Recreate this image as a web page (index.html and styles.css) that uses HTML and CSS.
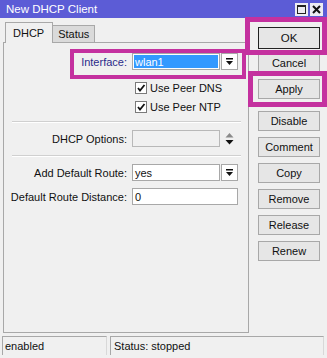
FILE: index.html
```html
<!DOCTYPE html>
<html>
<head>
<meta charset="utf-8">
<link rel="stylesheet" href="styles.css">
</head>
<body>
<div class="window">
  <div class="titlebar">
    <span class="title">New DHCP Client</span>
    <div class="win-btns">
      <span class="win-btn"><svg width="9" height="9" viewBox="0 0 9 9"><rect x="0.5" y="0.5" width="8" height="8" fill="none" stroke="#222" stroke-width="1"/><rect x="0.5" y="0.5" width="8" height="1.5" fill="#222"/></svg></span>
      <span class="win-btn"><svg width="9" height="9" viewBox="0 0 9 9"><path d="M1 1 L8 8 M8 1 L1 8" stroke="#111" stroke-width="2"/></svg></span>
    </div>
  </div>
  <div class="content">
    <div class="left">
      <div class="tabs">
        <span class="tab active">DHCP</span>
        <span class="tab">Status</span>
      </div>
      <div class="panel">
        <div class="row r-iface">
          <span class="label iface-label">Interface:</span>
          <span class="input w88 selected"><span class="sel">wlan1</span></span>
          <span class="dd"><svg width="9" height="9" viewBox="0 0 9 9"><rect x="1" y="1" width="7" height="1.5" fill="#111"/><path d="M1 4 H8 L4.5 8 Z" fill="#111"/></svg></span>
        </div>
        <div class="row check r-dns">
          <span class="label"></span>
          <span class="cb"><svg width="10" height="10" viewBox="0 0 10 10"><path d="M2 5 L4 7.5 L8.5 2" fill="none" stroke="#111" stroke-width="1.8"/></svg></span>
          <span class="cb-text">Use Peer DNS</span>
        </div>
        <div class="row check r-ntp">
          <span class="label"></span>
          <span class="cb"><svg width="10" height="10" viewBox="0 0 10 10"><path d="M2 5 L4 7.5 L8.5 2" fill="none" stroke="#111" stroke-width="1.8"/></svg></span>
          <span class="cb-text">Use Peer NTP</span>
        </div>
        <div class="sep s1"></div>
        <div class="row r-opts">
          <span class="label">DHCP Options:</span>
          <span class="input w88 disabled"></span>
          <span class="updown"><svg width="9" height="14" viewBox="0 0 9 14"><path d="M4.5 1 L8.5 5.5 H0.5 Z" fill="#8a8a8a"/><path d="M0.5 8 H8.5 L4.5 12.5 Z" fill="#111"/></svg></span>
        </div>
        <div class="sep s2"></div>
        <div class="row r-route">
          <span class="label">Add Default Route:</span>
          <span class="input w88">yes</span>
          <span class="dd"><svg width="9" height="9" viewBox="0 0 9 9"><rect x="1" y="1" width="7" height="1.5" fill="#111"/><path d="M1 4 H8 L4.5 8 Z" fill="#111"/></svg></span>
        </div>
        <div class="row r-dist">
          <span class="label">Default Route Distance:</span>
          <span class="input w106">0</span>
        </div>
      </div>
    </div>
    <div class="right">
      <span class="btn ok">OK</span>
      <span class="btn cancel">Cancel</span>
      <span class="btn apply">Apply</span>
      <span class="btn disable">Disable</span>
      <span class="btn">Comment</span>
      <span class="btn">Copy</span>
      <span class="btn">Remove</span>
      <span class="btn">Release</span>
      <span class="btn">Renew</span>
    </div>
  </div>
  <div class="statusbar">
    <span class="field f1">enabled</span>
    <span class="field f2">Status: stopped</span>
  </div>
  <div class="hl hl-ok"></div>
  <div class="hl hl-iface"></div>
  <div class="hl hl-apply"></div>
</div>
</body>
</html>
```
FILE: styles.css
```css
* { box-sizing: border-box; }
html, body { margin: 0; padding: 0; }
body {
  width: 327px;
  height: 358px;
  overflow: hidden;
  background: #f0f0f0;
  font-family: "Liberation Sans", Arial, sans-serif;
  font-size: 11px;
  color: #111;
}
.window { position: relative; width: 327px; height: 358px; }
.titlebar {
  height: 18px;
  background: #5c5cd6;
  color: #fff;
  display: flex;
  align-items: center;
  justify-content: space-between;
  padding: 0 4px 0 6px;
  font-size: 11.5px;
}
.win-btns { display: flex; gap: 2px; }
.win-btn {
  width: 13px; height: 13px;
  background: #ececf2;
  display: flex; align-items: center; justify-content: center;
}
.content { display: flex; height: 318px; }
.left {
  width: 249px;
  padding: 4px 0 0 3px;
  display: flex;
  flex-direction: column;
}
.tabs { display: flex; height: 20px; align-items: flex-end; padding-left: 2px; }
.tab {
  height: 17px;
  padding: 0 5px;
  background: #dadada;
  border: 1px solid #a8a8a8;
  border-bottom: none;
  border-left: none;
  display: flex; align-items: center;
}
.tab.active {
  height: 21px;
  margin-bottom: -1px;
  background: #f0f0f0;
  border-left: 1px solid #a8a8a8;
  padding: 0 8px 0 7px;
  position: relative;
  z-index: 1;
}
.panel {
  height: 291px;
  border: 1px solid #a8a8a8;
  padding-top: 10px;
}
.row { display: flex; align-items: center; height: 17px; }
.label { width: 128px; text-align: right; padding-right: 5px; flex: none; }
.iface-label { color: #2a2a8a; }
.input {
  height: 17px;
  background: #fff;
  border: 1px solid #a8a8a8;
  display: flex; align-items: center;
  padding-left: 2px;
  flex: none;
}
.w88 { width: 88px; }
.w106 { width: 106px; }
.input.disabled { background: #f0f0f0; border-color: #b8b8b8; }
.input.selected { padding: 1px; }
.sel {
  background: #3399ff;
  color: #fff;
  width: 100%; height: 100%;
  display: flex; align-items: center;
  padding-left: 1px;
}
.dd {
  width: 17px; height: 17px;
  margin-left: 1px;
  background: #fff;
  border: 1px solid #a8a8a8;
  display: flex; align-items: center; justify-content: center;
}
.updown { width: 14px; display: flex; justify-content: center; margin-left: 2px; }
.check { height: 19px; }
.r-dns { margin-top: 8px; }
.cb {
  width: 12px; height: 12px;
  margin-left: 3px;
  background: #fff;
  border: 1px solid #7a7a7a;
  display: flex; align-items: center; justify-content: center;
}
.cb-text { margin-left: 3px; }
.sep {
  margin-left: 8px;
  width: 229px;
  border-top: 1px solid #d0d0d0;
  border-bottom: 1px solid #fff;
}
.s1 { margin-top: 5px; }
.r-opts { margin-top: 7px; }
.s2 { margin-top: 8px; }
.r-route { margin-top: 7px; }
.r-dist { margin-top: 7px; }
.right {
  flex: 1;
  display: flex;
  flex-direction: column;
  align-items: flex-start;
  padding: 9px 0 0 9px;
}
.btn {
  width: 62px;
  height: 20px;
  background: #e6e6e6;
  border: 1px solid #a8a8a8;
  display: flex; align-items: center; justify-content: center;
  margin-top: 6px;
}
.btn.ok {
  height: 22px;
  margin-top: 0;
  border: 1.5px solid #222;
  font-size: 11.5px;
}
.btn.cancel { margin-top: 4px; }
.btn.disable { margin-top: 12px; }
.statusbar { display: flex; height: 21px; padding: 0 3px 2px 2px; gap: 3px; }
.field {
  border-top: 1px solid #a8a8a8;
  border-left: 1px solid #a8a8a8;
  border-right: 1px solid #d8d8d8;
  display: flex; align-items: center;
  padding-left: 2px;
}
.f1 { width: 105px; }
.f2 { flex: 1; padding-left: 3px; }
.hl {
  position: absolute;
  border: 5px solid #c4319f;
  pointer-events: none;
}
.hl-ok { left: 245px; top: 17px; width: 82px; height: 38px; }
.hl-iface { left: 70px; top: 49px; width: 176px; height: 30px; border-width: 4px; }
.hl-apply { left: 248px; top: 71px; width: 79px; height: 36px; }
```
